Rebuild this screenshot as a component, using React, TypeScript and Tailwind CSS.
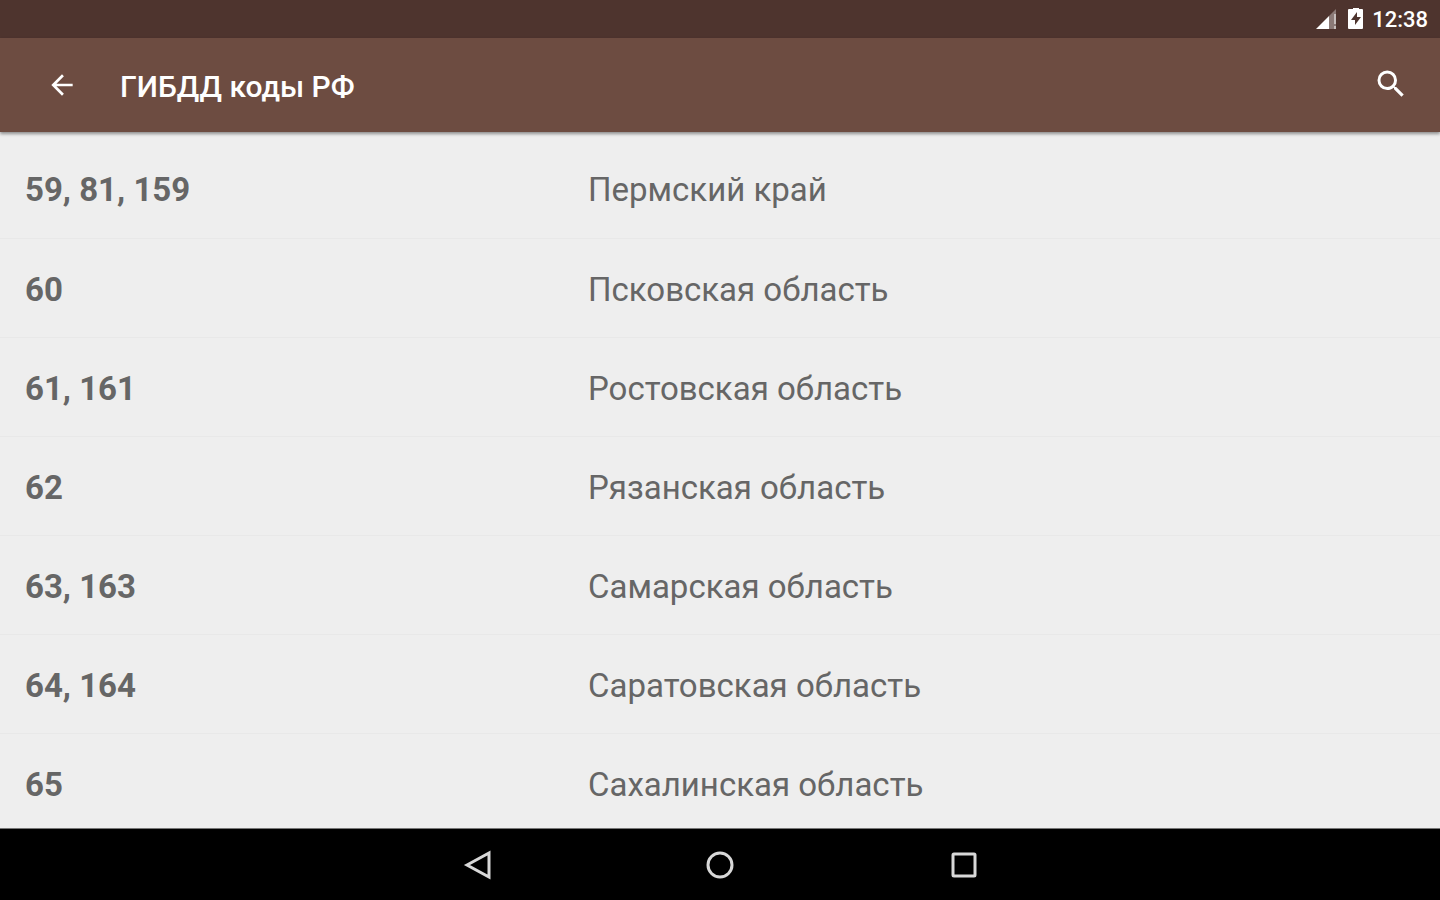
import { MdArrowBack, MdSearch } from "react-icons/md";

const regions = [
  { codes: "59, 81, 159", name: "Пермский край" },
  { codes: "60", name: "Псковская область" },
  { codes: "61, 161", name: "Ростовская область" },
  { codes: "62", name: "Рязанская область" },
  { codes: "63, 163", name: "Самарская область" },
  { codes: "64, 164", name: "Саратовская область" },
  { codes: "65", name: "Сахалинская область" },
];

function StatusBar() {
  return (
    <div className="flex h-[38px] shrink-0 items-center justify-end bg-[#4e342e] pt-0.5 pr-3 text-white">
      <svg className="mr-2 h-6 w-6" viewBox="0 0 24 24" fill="none">
        <path d="M0 21L13 8V21Z" fill="#fff" />
        <path d="M13 8L20 1V21H13Z" fill="#fff" fillOpacity="0.35" />
        <path d="M18 6h2v10h-2zM18 18h2v3h-2z" fill="#fff" fillOpacity="0.5" />
      </svg>
      <svg className="mr-2 h-6 w-4" viewBox="0 0 16 24">
        <path
          fill="#fff"
          fillRule="evenodd"
          d="M5 -1h6v2h3a1 1 0 0 1 1 1v18a1 1 0 0 1-1 1H1a1 1 0 0 1-1-1V2a1 1 0 0 1 1-1h4zM9 4l-6 8h4v5l6-8H9z"
        />
      </svg>
      <span className="text-[22px] leading-6 font-medium">12:38</span>
    </div>
  );
}

function Toolbar() {
  return (
    <header className="z-10 flex h-[94px] shrink-0 items-center bg-[#6d4c41] pr-[31px] pl-[46px] text-white shadow-[0_2px_3px_rgba(0,0,0,0.4)]">
      <button type="button" aria-label="Назад" className="mr-[42px]">
        <MdArrowBack className="h-8 w-8" />
      </button>
      <h1 className="grow pt-1 text-[30px] leading-9 font-medium">ГИБДД коды РФ</h1>
      <button type="button" aria-label="Поиск" className="pb-0.5">
        <MdSearch className="h-9 w-9" />
      </button>
    </header>
  );
}

function NavigationBar() {
  return (
    <nav className="flex h-[72px] shrink-0 items-center justify-center gap-[211px] border-t border-[#777777] bg-black text-[#d8d8d8]">
      <button type="button" aria-label="Назад">
        <svg className="h-8 w-8" viewBox="0 0 32 32" fill="none" stroke="currentColor" strokeWidth="3">
          <path d="M6 16L28 4V28Z" />
        </svg>
      </button>
      <button type="button" aria-label="Домой">
        <svg className="h-8 w-8" viewBox="0 0 32 32" fill="none" stroke="currentColor" strokeWidth="3">
          <circle cx="16" cy="16" r="12" />
        </svg>
      </button>
      <button type="button" aria-label="Обзор">
        <svg className="h-8 w-8" viewBox="0 0 32 32" fill="none" stroke="currentColor" strokeWidth="3">
          <rect x="6" y="5" width="22" height="22" rx="1" />
        </svg>
      </button>
    </nav>
  );
}

export default function App() {
  return (
    <div className="flex h-screen flex-col bg-[#eeeeee] font-[Roboto,sans-serif]">
      <StatusBar />
      <Toolbar />
      <main className="grow overflow-y-auto pt-[7px] [scrollbar-width:none]">
        <table className="w-full table-fixed border-collapse text-[33px] leading-10 text-[#666666]">
          <tbody>
            {regions.map((region) => (
              <tr key={region.codes} className="h-[99px] border-b border-[#e8e8e8]">
                <th scope="row" className="w-2/5 pt-1 pl-[25px] text-left font-bold">
                  {region.codes}
                </th>
                <td className="pt-1 pl-3">{region.name}</td>
              </tr>
            ))}
          </tbody>
        </table>
      </main>
      <NavigationBar />
    </div>
  );
}
